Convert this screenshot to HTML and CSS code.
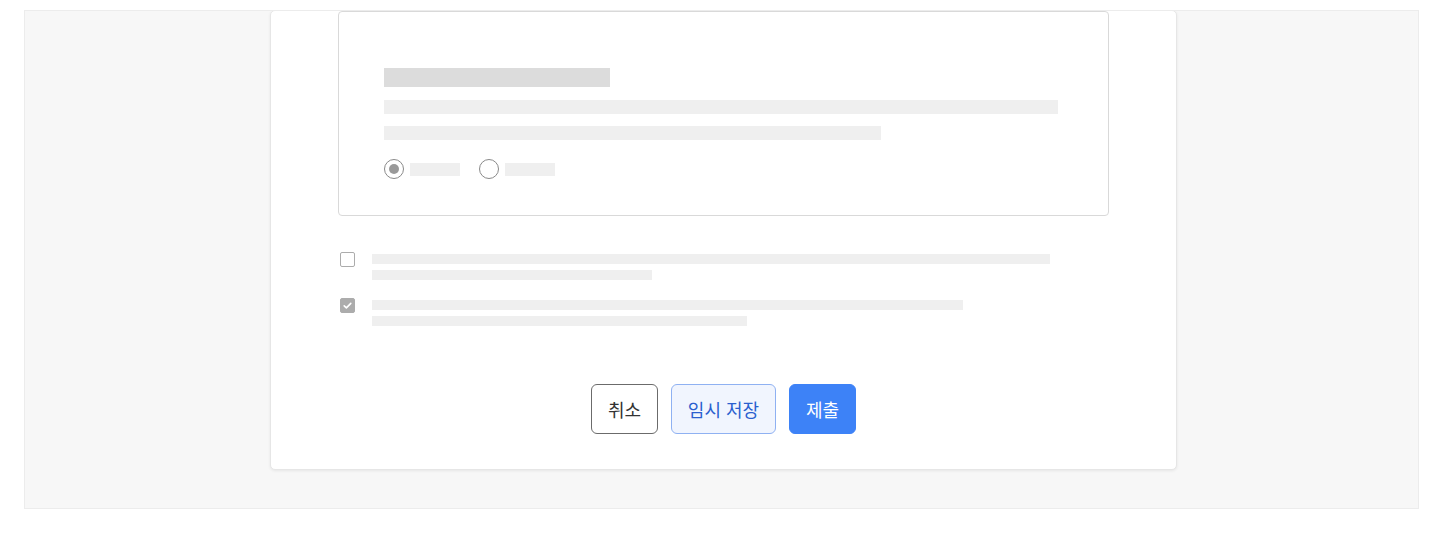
FILE: index.html
```html
<!DOCTYPE html>
<html lang="ko">
<head>
<meta charset="utf-8">
<link rel="stylesheet" href="styles.css">
</head>
<body>
<div class="page">
  <div class="stage">
    <div class="card">
      <div class="question">
        <div class="sk sk-title"></div>
        <div class="sk sk-line w674"></div>
        <div class="sk sk-line w497"></div>
        <div class="radios">
          <div class="radio-item">
            <span class="radio checked"></span>
            <span class="sk sk-label"></span>
          </div>
          <div class="radio-item">
            <span class="radio"></span>
            <span class="sk sk-label"></span>
          </div>
        </div>
      </div>
      <div class="checks">
        <div class="check-row">
          <span class="checkbox"></span>
          <div class="check-lines">
            <div class="sk sk-small w678"></div>
            <div class="sk sk-small w280"></div>
          </div>
        </div>
        <div class="check-row">
          <span class="checkbox checked">
            <svg viewBox="0 0 15 15" width="15" height="15"><path d="M4.2 7.8 L6.4 9.9 L10.8 5.4" fill="none" stroke="#fff" stroke-width="1.6" stroke-linecap="round" stroke-linejoin="round"/></svg>
          </span>
          <div class="check-lines">
            <div class="sk sk-small w591"></div>
            <div class="sk sk-small w375"></div>
          </div>
        </div>
      </div>
      <div class="actions">
        <button class="btn btn-cancel">취소</button>
        <button class="btn btn-draft">임시 저장</button>
        <button class="btn btn-submit">제출</button>
      </div>
    </div>
  </div>
</div>
</body>
</html>
```

FILE: styles.css
```css
* { box-sizing: border-box; }
html, body { margin: 0; padding: 0; background: #fff; }
body { font-family: "Noto Sans CJK KR", "Noto Sans", sans-serif; }

.page { padding: 10px 24px 0 24px; }

.stage {
  height: 499px;
  background: #f7f7f7;
  border: 1px solid #ececec;
  overflow: hidden;
}

.card {
  width: 907px;
  margin-left: 245px;
  margin-top: -1px;
  height: 460px;
  background: #fff;
  border: 1px solid #e6e6e6;
  border-radius: 5px;
  box-shadow: 0 1px 3px rgba(0,0,0,0.07);
  padding: 0 67px 0 67px;
  display: flex;
  flex-direction: column;
}

.question {
  border: 1px solid #d9d9d9;
  border-radius: 4px;
  padding: 56px 45px 36px 45px;
  height: 205px;
}

.sk { background: #efefef; }
.sk-title { width: 226px; height: 19px; background: #dcdcdc; }
.sk-line { height: 14px; margin-top: 13px; }
.sk-line.w674 { width: 674px; }
.sk-line.w497 { width: 497px; margin-top: 12px; }

.radios { display: flex; gap: 19px; margin-top: 19px; }
.radio-item { display: flex; align-items: center; gap: 6px; }
.radio {
  width: 20px; height: 20px;
  border: 1px solid #8a8a8a;
  border-radius: 50%;
  display: flex; align-items: center; justify-content: center;
}
.radio.checked::after {
  content: "";
  width: 10px; height: 10px;
  border-radius: 50%;
  background: #999;
}
.sk-label { width: 50px; height: 13px; }

.checks {
  margin-top: 36px;
  padding-left: 2px;
  display: flex;
  flex-direction: column;
  gap: 18px;
}
.check-row { display: flex; align-items: flex-start; gap: 17px; }
.checkbox {
  width: 15px; height: 15px;
  border: 1px solid #acacac;
  border-radius: 2px;
  flex: none;
  display: flex;
}
.checkbox.checked { background: #acacac; border-color: #acacac; }
.checkbox.checked svg { margin: -1px; }
.check-lines { display: flex; flex-direction: column; gap: 6px; padding-top: 2px; }
.sk-small { height: 10px; }
.w678 { width: 678px; }
.w280 { width: 280px; }
.w591 { width: 591px; }
.w375 { width: 375px; }

.actions {
  margin-top: 58px;
  display: flex;
  justify-content: center;
  gap: 13px;
}
.btn {
  height: 50px;
  padding: 0 15px;
  border-radius: 6px;
  font-family: "Noto Sans CJK KR", "Noto Sans", sans-serif;
  font-size: 18px;
  line-height: 1;
  cursor: pointer;
}
.btn-cancel { background: #fff; border: 1px solid #6b6b6b; color: #333; width: 67px; }
.btn-draft { background: #f1f5fe; border: 1px solid #8fb1f2; color: #2b5fcf; width: 105px; }
.btn-submit { background: #3d82f7; border: 1px solid #3d82f7; color: #fff; width: 67px; }
```
